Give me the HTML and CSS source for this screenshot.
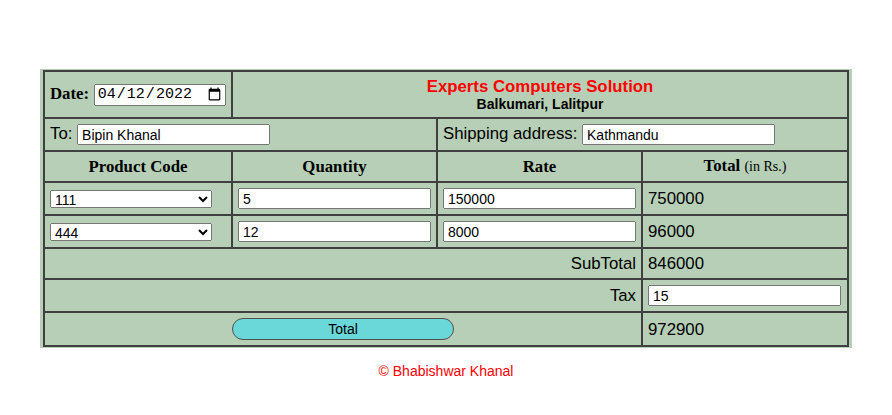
FILE: index.html
```html
<!DOCTYPE html>
<html lang="en">
<head>
<meta charset="utf-8">
<title>Invoice</title>
<link rel="stylesheet" href="styles.css">
</head>
<body>
<div class="wrap">
  <table class="invoice">
    <colgroup>
      <col class="c1"><col class="c2"><col class="c3"><col class="c4">
    </colgroup>
    <tr>
      <td class="date-cell"><span class="date-label">Date:</span> <input class="date-input" type="date" value="2022-04-12"></td>
      <td colspan="3" class="company">
        <div class="company-name">Experts Computers Solution</div>
        <div class="company-addr">Balkumari, Lalitpur</div>
      </td>
    </tr>
    <tr>
      <td colspan="2">To: <input class="field" type="text" value="Bipin Khanal"></td>
      <td colspan="2">Shipping address: <input class="field" type="text" value="Kathmandu"></td>
    </tr>
    <tr>
      <th>Product Code</th>
      <th>Quantity</th>
      <th>Rate</th>
      <th>Total <span class="unit">(in Rs.)</span></th>
    </tr>
    <tr>
      <td><select class="code"><option>111</option><option>444</option></select></td>
      <td><input class="field" type="text" value="5"></td>
      <td><input class="field" type="text" value="150000"></td>
      <td>750000</td>
    </tr>
    <tr>
      <td><select class="code"><option>444</option><option>111</option></select></td>
      <td><input class="field" type="text" value="12"></td>
      <td><input class="field" type="text" value="8000"></td>
      <td>96000</td>
    </tr>
    <tr>
      <td colspan="3" class="right">SubTotal</td>
      <td>846000</td>
    </tr>
    <tr>
      <td colspan="3" class="right">Tax</td>
      <td><input class="field" type="text" value="15"></td>
    </tr>
    <tr>
      <td colspan="3" class="center"><button class="total-btn" type="button">Total</button></td>
      <td>972900</td>
    </tr>
  </table>
</div>
<p class="footer">© Bhabishwar Khanal</p>
</body>
</html>
```

FILE: styles.css
```css
body {
  margin: 0;
  background: #ffffff;
  font-family: "Liberation Sans", Arial, sans-serif;
  font-size: 16.8px;
  color: #000;
}

.wrap {
  width: 812px;
  margin: 69px auto 0;
  padding: 1px 3px;
  box-sizing: border-box;
  background: #b6cfb6;
}

.invoice {
  width: 806px;
  table-layout: fixed;
  border-collapse: separate;
  border-spacing: 0;
  border: 1px solid #404040;
}

.c1 { width: 188px; }
.c2 { width: 205px; }
.c3 { width: 205px; }
.c4 { width: 206px; }

.invoice td,
.invoice th {
  border: 1px solid #404040;
  padding: 5px;
  text-align: left;
  vertical-align: middle;
  white-space: nowrap;
  line-height: 19px;
}

.invoice th {
  font-family: "Liberation Serif", "Times New Roman", serif;
  font-weight: bold;
  text-align: center;
  line-height: 18px;
}

.unit {
  font-weight: normal;
  font-size: 14px;
}

.date-label {
  font-family: "Liberation Serif", "Times New Roman", serif;
  font-weight: bold;
}

.date-input {
  font-family: "Liberation Mono", monospace;
  font-size: 15px;
  width: 132px;
  height: 22px;
  box-sizing: border-box;
  vertical-align: middle;
}

.company {
  text-align: center !important;
}

.company-name {
  color: #ff0000;
  font-weight: bold;
  line-height: 19px;
}

.company-addr {
  font-weight: bold;
  font-size: 14px;
  line-height: 16px;
}

.field {
  font-family: "Liberation Sans", Arial, sans-serif;
  font-size: 14px;
  width: 193px;
  height: 21px;
  box-sizing: border-box;
  padding: 1px 3px;
  vertical-align: middle;
}

.code {
  font-family: "Liberation Sans", Arial, sans-serif;
  font-size: 14px;
  width: 162px;
  height: 18px;
  box-sizing: border-box;
  vertical-align: middle;
}

.right {
  text-align: right !important;
}

.center {
  text-align: center !important;
}

.total-btn {
  width: 222px;
  height: 22px;
  border: 1px solid #505050;
  border-radius: 11px;
  background: #6ad8d8;
  font-family: "Liberation Sans", Arial, sans-serif;
  font-size: 14px;
  color: #000;
  padding: 0;
  vertical-align: middle;
}

.footer {
  margin: 15px 0 0;
  text-align: center;
  color: #ff0000;
  font-size: 14px;
}
```
